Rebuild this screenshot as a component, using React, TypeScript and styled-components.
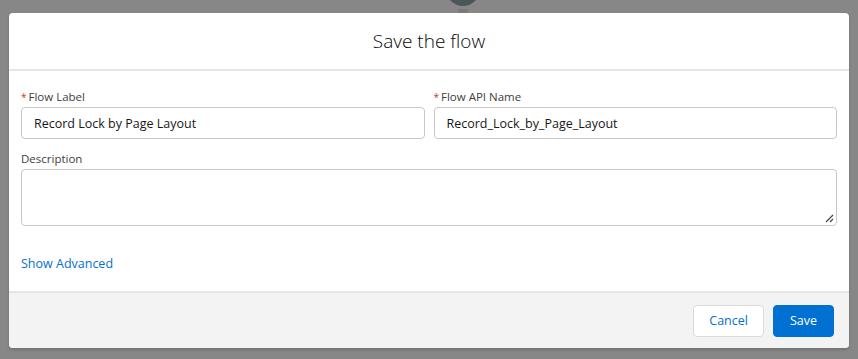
import { FunctionComponent } from "react";
import styled, { createGlobalStyle } from "styled-components";

const GlobalStyle = createGlobalStyle`
  html, body {
    margin: 0;
    padding: 0;
    background: #878787;
    font-family: "Open Sans", "Noto Sans", sans-serif;
  }
`;

const Backdrop = styled.div`
  position: relative;
  width: 858px;
  height: 359px;
  background: #878787;
  padding: 13px 9px 0 9px;
  box-sizing: border-box;
  overflow: hidden;
`;

// part of the flow canvas peeking from behind the modal
const Node = styled.div`
  position: absolute;
  left: 446px;
  top: -28px;
  width: 34px;
  height: 34px;
  border-radius: 50%;
  background: #4a5657;
`;

const NodeHandle = styled.div`
  position: absolute;
  left: 458px;
  top: 9px;
  width: 10px;
  height: 4px;
  background: #7a7a7a;
`;

const Modal = styled.div`
  position: relative;
  width: 840px;
  height: 335px;
  background: #fff;
  border-radius: 4px;
  box-shadow: 0 2px 3px rgba(0, 0, 0, 0.16);
  display: flex;
  flex-direction: column;
  overflow: hidden;
`;

const Header = styled.div`
  height: 56px;
  border-bottom: 2px solid #e5e5e5;
  display: flex;
  align-items: center;
  justify-content: center;
`;

const Title = styled.h2`
  margin: 0;
  font-size: 19px;
  font-weight: 300;
  color: #080707;
`;

const Body = styled.div`
  flex: 1;
  padding: 18px 12px 0 12px;
  display: flex;
  flex-direction: column;
`;

const Row = styled.div`
  display: grid;
  grid-template-columns: 1fr 1fr;
  column-gap: 9px;
`;

const Field = styled.div<{ gapTop?: number }>`
  display: flex;
  flex-direction: column;
  margin-top: ${({ gapTop }) => gapTop ?? 0}px;
`;

const Label = styled.label`
  font-size: 11.5px;
  color: #3e3e3c;
  line-height: 16px;
  margin-bottom: 2px;
`;

const Required = styled.abbr`
  color: #c23934;
  margin-right: 2px;
  text-decoration: none;
  font-size: 10px;
`;

const Input = styled.div`
  height: 32px;
  box-sizing: border-box;
  border: 1px solid #c9c7c5;
  border-radius: 4px;
  padding: 0 12px;
  display: flex;
  align-items: center;
  font-size: 12.5px;
  color: #181818;
`;

const TextArea = styled.div`
  position: relative;
  height: 57px;
  box-sizing: border-box;
  border: 1px solid #c9c7c5;
  border-radius: 4px;
`;

const Grip = styled.svg`
  position: absolute;
  right: 2px;
  bottom: 2px;
`;

const Link = styled.a`
  margin-top: 29px;
  font-size: 12.5px;
  color: #0070d2;
  text-decoration: none;
`;

const Footer = styled.div`
  height: 55px;
  flex: none;
  border-top: 2px solid #e5e5e5;
  background: #f3f3f3;
  display: flex;
  justify-content: flex-end;
  align-items: center;
  gap: 9px;
  padding: 0 15px 0 0;
`;

const Button = styled.button<{ brand?: boolean }>`
  height: 32px;
  padding: 0 ${({ brand }) => (brand ? 16 : 15)}px;
  border-radius: 4px;
  font-family: inherit;
  font-size: 12.5px;
  border: 1px solid ${({ brand }) => (brand ? "#0070d2" : "#dddbda")};
  background: ${({ brand }) => (brand ? "#0070d2" : "#fff")};
  color: ${({ brand }) => (brand ? "#fff" : "#0070d2")};
`;

const FieldLabel: FunctionComponent<{ text: string; required?: boolean }> = ({
  text,
  required,
}) => (
  <Label>
    {required && <Required title="required">*</Required>}
    {text}
  </Label>
);

export default function App() {
  return (
    <>
      <GlobalStyle />
      <Backdrop>
        <Node />
        <NodeHandle />
        <Modal>
          <Header>
            <Title>Save the flow</Title>
          </Header>
          <Body>
            <Row>
              <Field>
                <FieldLabel text="Flow Label" required />
                <Input>Record Lock by Page Layout</Input>
              </Field>
              <Field>
                <FieldLabel text="Flow API Name" required />
                <Input>Record_Lock_by_Page_Layout</Input>
              </Field>
            </Row>
            <Field gapTop={12}>
              <FieldLabel text="Description" />
              <TextArea>
                <Grip width="9" height="9" viewBox="0 0 9 9">
                  <path d="M8 1 L1 8 M8 5 L5 8" stroke="#444" strokeWidth="1.2" />
                </Grip>
              </TextArea>
            </Field>
            <Link href="#">Show Advanced</Link>
          </Body>
          <Footer>
            <Button>Cancel</Button>
            <Button brand>Save</Button>
          </Footer>
        </Modal>
      </Backdrop>
    </>
  );
}
